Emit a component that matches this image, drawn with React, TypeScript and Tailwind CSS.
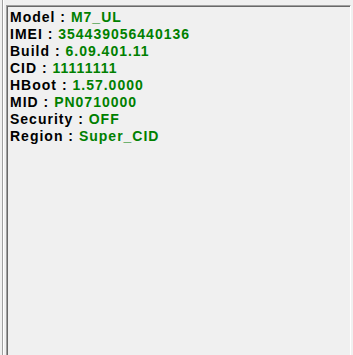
const rows: [string, string][] = [
  ['Model', 'M7_UL'],
  ['IMEI', '354439056440136'],
  ['Build', '6.09.401.11'],
  ['CID', '11111111'],
  ['HBoot', '1.57.0000'],
  ['MID', 'PN0710000'],
  ['Security', 'OFF'],
  ['Region', 'Super_CID'],
];

export default function App() {
  return (
    <div className="w-[353px] h-[355px] bg-[#f0f0f0] flex overflow-hidden">
      <div className="ml-[2px] w-[2px] h-full border-l border-l-[#a0a0a0] border-r border-r-white" />
      <div className="ml-[2px] mt-[5px] w-[345px] h-[350px] border-t border-l border-t-[#a0a0a0] border-l-[#a0a0a0] border-r border-r-white">
        <div className="h-full border-t border-l border-t-[#696969] border-l-[#696969] pl-[2px] pt-[2px] font-['Liberation_Sans',Arial,sans-serif] text-[14px] leading-[17px] font-bold tracking-[1px]">
          {rows.map(([k, v]) => (
            <div key={k} className="whitespace-nowrap">
              <span className="text-black">{k} : </span>
              <span className="text-[#008000]">{v}</span>
            </div>
          ))}
        </div>
      </div>
    </div>
  );
}
